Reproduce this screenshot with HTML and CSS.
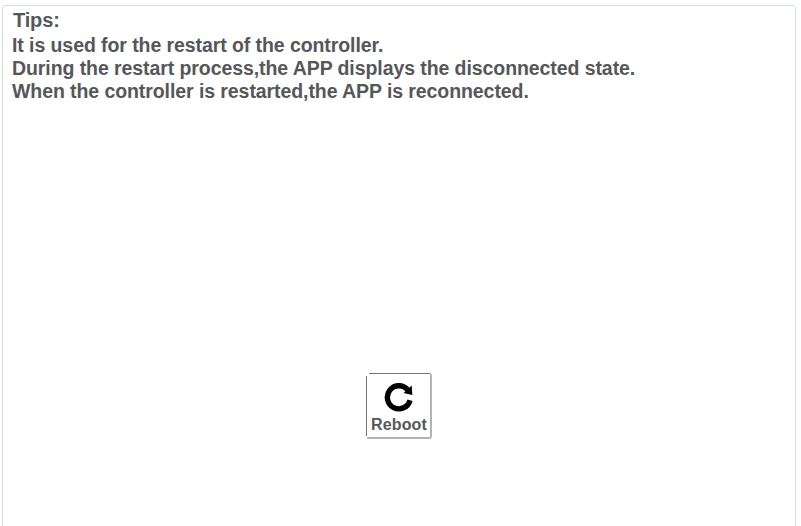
FILE: index.html
```html
<!DOCTYPE html>
<html lang="en">
<head>
<meta charset="utf-8">
<title>Reboot</title>
<link rel="stylesheet" href="styles.css">
</head>
<body>
<main class="panel">
  <h1 class="title">Tips:</h1>
  <div class="tips">
    <p>It is used for the restart of the controller.</p>
    <p>During the restart process,the APP displays the disconnected state.</p>
    <p>When the controller is restarted,the APP is reconnected.</p>
  </div>
  <button class="reboot" type="button">
    <svg class="icon" viewBox="0 0 30 30" aria-hidden="true">
      <path d="M23.9 8.2A11.5 11.5 0 1 0 26 18.2" fill="none" stroke="#000" stroke-width="5.4"/>
      <path d="M27.7 3.5L28.3 13L19.6 11Z"/>
    </svg>
    <span>Reboot</span>
  </button>
</main>
</body>
</html>
```
FILE: styles.css
```css
* { box-sizing: border-box; }
body {
  margin: 0;
  height: 526px;
  overflow: hidden;
  background: #fff;
  color: #555759;
  font-family: "Liberation Sans", Arial, sans-serif;
  font-weight: bold;
}
.panel {
  display: flex;
  flex-direction: column;
  width: 794px;
  height: 540px;
  margin: 5px 0 0 2px;
  border: 1px solid #d3dee4;
  border-radius: 3px;
}
.title {
  margin: 3px 0 0 10px;
  font-size: 20px;
  line-height: 23px;
  letter-spacing: -0.15px;
}
.tips {
  margin: 2px 0 0 9px;
  font-size: 19.5px;
  line-height: 23px;
  letter-spacing: -0.08px;
  white-space: nowrap;
}
.tips p { margin: 0; }
.reboot {
  display: flex;
  flex-direction: column;
  align-items: center;
  width: 66px;
  height: 66px;
  margin: 270px 0 0 363px;
  padding: 9px 0 0;
  border: 0;
  border-radius: 3px;
  background:
    linear-gradient(#767676, #767676) 3px 0 / 62px 1px no-repeat,
    linear-gradient(#767676, #767676) 0 3px / 1px 60px no-repeat,
    linear-gradient(#b2b2b2, #b2b2b2) 64px 1px / 2px 65px no-repeat,
    linear-gradient(#b2b2b2, #b2b2b2) 1px 64px / 65px 2px no-repeat,
    #fff;
  color: #555759;
  font: bold 16px/19px "Liberation Sans", Arial, sans-serif;
  letter-spacing: 0.15px;
}
.icon {
  width: 30px;
  height: 30px;
  flex: none;
}
.reboot span { margin-top: 3px; }
```
